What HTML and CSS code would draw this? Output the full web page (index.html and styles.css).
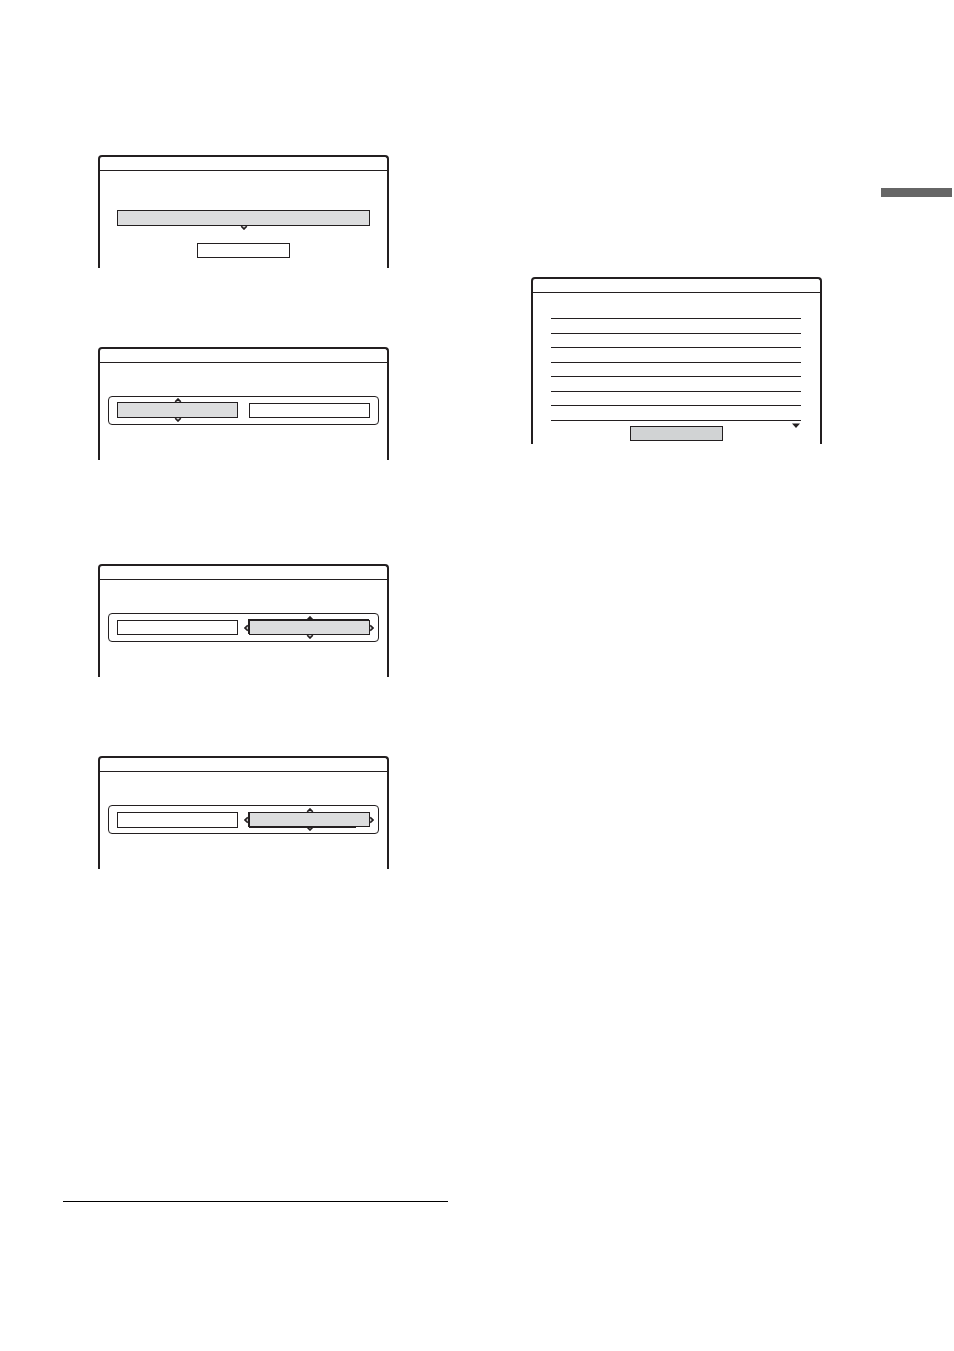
FILE: index.html
```
<!DOCTYPE html>
<html lang="en">
<head>
<meta charset="utf-8">
<meta name="viewport" content="width=device-width, initial-scale=1">
<link rel="stylesheet" href="styles.css">
</head>
<body>
<svg class="symbols" aria-hidden="true">
  <symbol id="caret" viewBox="0 0 8 4">
    <path d="M1.2 .2 4 3 6.8 .2" fill="#c8c8ca" stroke="#231f20" stroke-width="1.6"/>
  </symbol>
</svg>
<main class="page">
  <section class="column">
    <section class="panel">
      <header class="panel-head"></header>
      <div class="panel-body stacked">
        <div class="slot">
          <button class="field tall selected" type="button" aria-label="Name"></button>
          <svg class="caret down"><use href="#caret"/></svg>
        </div>
        <button class="field action" type="button" aria-label="Confirm"></button>
      </div>
    </section>
    <section class="panel">
      <header class="panel-head"></header>
      <div class="panel-body">
        <div class="group">
          <div class="slot">
            <button class="field tall selected" type="button" aria-label="First value"></button>
            <svg class="caret up"><use href="#caret"/></svg>
            <svg class="caret down"><use href="#caret"/></svg>
          </div>
          <div class="slot"><button class="field" type="button" aria-label="Second value"></button></div>
        </div>
      </div>
    </section>
    <section class="panel spaced">
      <header class="panel-head"></header>
      <div class="panel-body">
        <div class="group">
          <div class="slot"><button class="field" type="button" aria-label="First value"></button></div>
          <div class="slot">
            <svg class="caret left"><use href="#caret"/></svg>
            <svg class="caret right"><use href="#caret"/></svg>
            <svg class="caret up high"><use href="#caret"/></svg>
            <svg class="caret down"><use href="#caret"/></svg>
            <button class="field selected raised" type="button" aria-label="Second value"></button>
          </div>
        </div>
      </div>
    </section>
    <section class="panel">
      <header class="panel-head"></header>
      <div class="panel-body">
        <div class="group top">
          <div class="slot"><button class="field tall" type="button" aria-label="First value"></button></div>
          <div class="slot">
            <svg class="caret left"><use href="#caret"/></svg>
            <svg class="caret right"><use href="#caret"/></svg>
            <svg class="caret up"><use href="#caret"/></svg>
            <svg class="caret down"><use href="#caret"/></svg>
            <button class="field selected underlined" type="button" aria-label="Second value"></button>
          </div>
        </div>
      </div>
    </section>
    <hr class="rule">
  </section>
  <section class="column side">
    <div class="tab"></div>
    <section class="panel">
      <header class="panel-head"></header>
      <div class="list-body">
        <ul class="list">
          <li></li><li></li><li></li><li></li><li></li><li></li><li></li><li></li>
        </ul>
        <div class="list-foot">
          <button class="field action dark" type="button" aria-label="Confirm"></button>
          <svg class="more" viewBox="0 0 8 5" aria-hidden="true"><path d="M0 .4h8L4 5z" fill="#231f20"/></svg>
        </div>
      </div>
    </section>
  </section>
</main>
</body>
</html>
```
FILE: styles.css
```
* {
  box-sizing: border-box;
}

body {
  margin: 0;
  background: #fff;
  font-family: "Liberation Sans", Arial, sans-serif;
}

.symbols {
  position: absolute;
  width: 0;
  height: 0;
}

.page {
  display: grid;
  grid-template-columns: minmax(0, 385fr) minmax(0, 421fr);
  column-gap: 83px;
  align-items: start;
  padding: 155px 2px 149px 63px;
}

.column {
  display: flex;
  flex-direction: column;
  gap: 79px;
}

.column .panel {
  margin: 0 59px 0 35px;
}

.column .spaced {
  margin-top: 25px;
}

.side {
  gap: 80px;
  padding-top: 33px;
}

.side .panel {
  margin: 0 130px 0 0;
}

.panel {
  border: 2px solid #231f20;
  border-bottom: 0;
  border-radius: 4px 4px 0 0;
}

.panel-head {
  height: 14px;
  border-bottom: 1px solid #231f20;
}

.panel-body {
  padding: 33px 8px 35px;
}

.stacked {
  display: flex;
  flex-direction: column;
  gap: 17px;
  padding: 39px 17px 10px;
}

.group {
  display: grid;
  grid-template-columns: 1fr 1fr;
  column-gap: 11px;
  align-items: end;
  min-height: 29px;
  padding: 5px 8px 6px;
  border: 1px solid #231f20;
  border-radius: 4px;
}

.group.top {
  align-items: start;
  padding: 6px 8px 5px;
}

.slot {
  position: relative;
}

.field {
  display: block;
  position: relative;
  width: 100%;
  height: 15px;
  margin: 0;
  padding: 0;
  border: 1px solid #231f20;
  border-radius: 0;
  background: #fff;
}

.tall {
  height: 16px;
}

.selected {
  background: #dcddde;
}

.dark {
  background: #d1d3d4;
}

.action {
  width: 93px;
  align-self: center;
}

.raised {
  box-shadow: -1px -1px 0 #231f20;
}

.underlined {
  box-shadow: -1px 0 0 #231f20;
}

.underlined::after {
  content: "";
  position: absolute;
  top: 100%;
  left: -1px;
  width: 90%;
  height: 2px;
  background: #231f20;
}

.caret {
  position: absolute;
  width: 8px;
  height: 4px;
}

.down {
  top: 100%;
  left: calc(50% - 4px);
}

.up {
  bottom: 100%;
  left: calc(50% - 4px);
  transform: rotate(180deg);
}

.left {
  top: calc(50% - 2px);
  left: -7px;
  transform: rotate(90deg);
}

.right {
  top: calc(50% - 2px);
  right: -6px;
  transform: rotate(-90deg);
}

.rule {
  width: 100%;
  height: 1px;
  margin: 253px 0 0;
  border: 0;
  background: #000;
}

.tab {
  align-self: flex-end;
  width: 71px;
  height: 9px;
  background: #666;
}

.list-body {
  padding: 11px 19px 3px 18px;
}

.list {
  margin: 0;
  padding: 0;
  list-style: none;
}

.list li {
  height: 15px;
  border-bottom: 1px solid #231f20;
}

.list li:nth-child(odd):not(:first-child) {
  height: 14px;
}

.list-foot {
  display: grid;
  grid-template-columns: 1fr auto 1fr;
  align-items: start;
  padding-top: 2px;
}

.list-foot .action {
  grid-column: 2;
  margin-top: 3px;
}

.more {
  justify-self: end;
  width: 8px;
  height: 5px;
  margin-right: 1px;
}
```
